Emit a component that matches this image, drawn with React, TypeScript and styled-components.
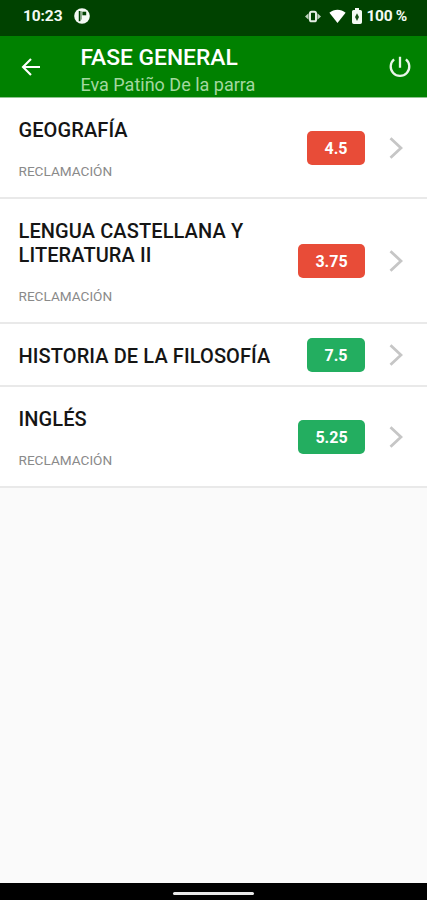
import React from "react";
import styled, { createGlobalStyle } from "styled-components";

const Global = createGlobalStyle`
  * { box-sizing: border-box; }
  body { margin: 0; background: #fafafa; font-family: Roboto, "Liberation Sans", sans-serif; }
`;

const Screen = styled.div`
  display: flex;
  flex-direction: column;
  width: 427px;
  height: 900px;
  overflow: hidden;
  background: #fafafa;
`;

const StatusBar = styled.div`
  display: flex;
  align-items: center;
  height: 36px;
  flex: none;
  padding: 0 20px 4px 23px;
  background: #004200;
  color: #f4faf4;
`;

const StatusText = styled.span<{ $spacing: string }>`
  font-size: 15.5px;
  font-weight: 700;
  line-height: 18px;
  letter-spacing: ${(p) => p.$spacing};
  white-space: nowrap;
`;

const Clock = styled.div`
  display: flex;
  align-items: center;
  gap: 12px;
  flex: 1;
`;

const Indicators = styled.div`
  display: flex;
  align-items: center;
`;

const Icon = styled.svg<{ $mr?: number }>`
  display: block;
  flex: none;
  margin-right: ${(p) => p.$mr ?? 0}px;
`;

const AppBar = styled.header`
  display: flex;
  align-items: center;
  height: 62px;
  flex: none;
  padding: 0 16px 0 21px;
  background: #008100;
  border-bottom: 1px solid #8fc48f;
  color: #fff;
`;

const Heading = styled.div`
  flex: 1;
  margin-left: 39.5px;
  padding-top: 7px;
`;

const ScreenTitle = styled.h1`
  margin: 0;
  font-size: 22.8px;
  font-weight: 500;
  line-height: 28px;
  white-space: nowrap;
`;

const Student = styled.div`
  font-size: 18px;
  line-height: 25px;
  color: #a4d8a0;
  white-space: nowrap;
`;

const List = styled.main`
  flex: 1;
`;

const Row = styled.section<{ $height: number }>`
  display: flex;
  align-items: center;
  height: ${(p) => p.$height}px;
  padding: 0 24px 0 18px;
  background: #fff;
  border-bottom: 2px solid #e9e9e9;
`;

const Info = styled.div`
  flex: 1;
  min-width: 0;
  padding: 2px 0 0 0.5px;
`;

const Subject = styled.h2`
  margin: 0;
  font-size: 20px;
  font-weight: 500;
  line-height: 24px;
  letter-spacing: 0.1px;
  color: #151515;
  white-space: pre-line;
`;

const Claim = styled.div`
  margin-top: 20.5px;
  font-size: 13.6px;
  line-height: 16px;
  color: #8a8a8a;
`;

const Grade = styled.div<{ $passed: boolean; $wide: boolean }>`
  display: flex;
  align-items: center;
  justify-content: center;
  width: ${(p) => (p.$wide ? 67 : 58)}px;
  height: 34px;
  margin-right: 24px;
  flex: none;
  padding-top: 2px;
  border-radius: 5px;
  background: ${(p) => (p.$passed ? "#23ae60" : "#e84c38")};
  color: #fff;
  font-size: 16px;
  font-weight: 700;
`;

const NavBar = styled.footer`
  display: flex;
  align-items: center;
  justify-content: center;
  height: 17px;
  flex: none;
  padding-top: 3px;
  background: #000;
`;

const HomeHandle = styled.div`
  width: 81px;
  height: 3px;
  border-radius: 2px;
  background: #e8e8e8;
`;

const subjects = [
  { name: "GEOGRAFÍA", grade: "4.5", claim: true, height: 101 },
  { name: "LENGUA CASTELLANA Y\nLITERATURA II", grade: "3.75", claim: true, height: 125 },
  { name: "HISTORIA DE LA FILOSOFÍA", grade: "7.5", claim: false, height: 63 },
  { name: "INGLÉS", grade: "5.25", claim: true, height: 101 },
];

export default function App() {
  return (
    <Screen>
      <Global />
      <StatusBar>
        <Clock>
          <StatusText $spacing="-0.1px">10:23</StatusText>
          <Icon width="16" height="16" viewBox="0 0 16 16">
            <circle cx="8" cy="8" r="7.8" fill="#f4faf4" />
            <path d="M5.6 3v10.2" stroke="#004200" strokeWidth="1.7" />
            <path d="M8.4 3.7h3.8v3.6H8.4z" fill="#004200" />
            <path d="M7.3 3.2v8.4" stroke="#004200" strokeWidth="0.5" />
          </Icon>
        </Clock>
        <Indicators>
          <Icon width="18" height="13" viewBox="0 0 18 13" $mr={7}>
            <rect x="6" y="1.7" width="6" height="9.6" rx="1.6" fill="none" stroke="#e3eee3" strokeWidth="2" />
            <path d="M4.6 3.2v6.6L1 6.5zM13.4 3.2v6.6L17 6.5z" fill="#bcd0bc" />
          </Icon>
          <Icon width="17" height="14" viewBox="0 0 17 14" $mr={6}>
            <path d="M.4 3.8C5-.2 12-.2 16.6 3.8L8.5 14z" fill="#fff" />
          </Icon>
          <Icon width="10" height="16" viewBox="0 0 10 16" $mr={5}>
            <path d="M3 0h4v2h1.4Q10 2 10 3.6v10.6q0 1.8-1.8 1.8H1.8Q0 16 0 14.2V3.6Q0 2 1.6 2H3z" fill="#f4faf4" />
            <path d="M5 5.2 7 9l-2 4-2-4z" fill="#164f16" />
          </Icon>
          <StatusText $spacing="-0.3px">100 %</StatusText>
        </Indicators>
      </StatusBar>
      <AppBar>
        <Icon width="20" height="18" viewBox="0 0 20 18" fill="none" stroke="#fff" strokeWidth="2.1">
          <path d="M19 9H2M10 1 2 9l8 8" />
        </Icon>
        <Heading>
          <ScreenTitle>FASE GENERAL</ScreenTitle>
          <Student>Eva Patiño De la parra</Student>
        </Heading>
        <Icon width="22" height="22" viewBox="0 0 22 22" fill="none" stroke="#e9f6e9" strokeWidth="2.3">
          <path d="M11 .8v11M5.1 3.4a9.3 9.3 0 1 0 11.8 0" />
        </Icon>
      </AppBar>
      <List>
        {subjects.map((s) => (
          <Row key={s.name} $height={s.height}>
            <Info>
              <Subject>{s.name}</Subject>
              {s.claim && <Claim>RECLAMACIÓN</Claim>}
            </Info>
            <Grade $passed={parseFloat(s.grade) >= 5} $wide={s.grade.length > 3}>
              {s.grade}
            </Grade>
            <Icon width="14" height="22" viewBox="0 0 14 22" fill="none" stroke="#c6c6c6" strokeWidth="2.8">
              <path d="M1.5 1.2 12 11 1.5 20.8" />
            </Icon>
          </Row>
        ))}
      </List>
      <NavBar>
        <HomeHandle />
      </NavBar>
    </Screen>
  );
}
